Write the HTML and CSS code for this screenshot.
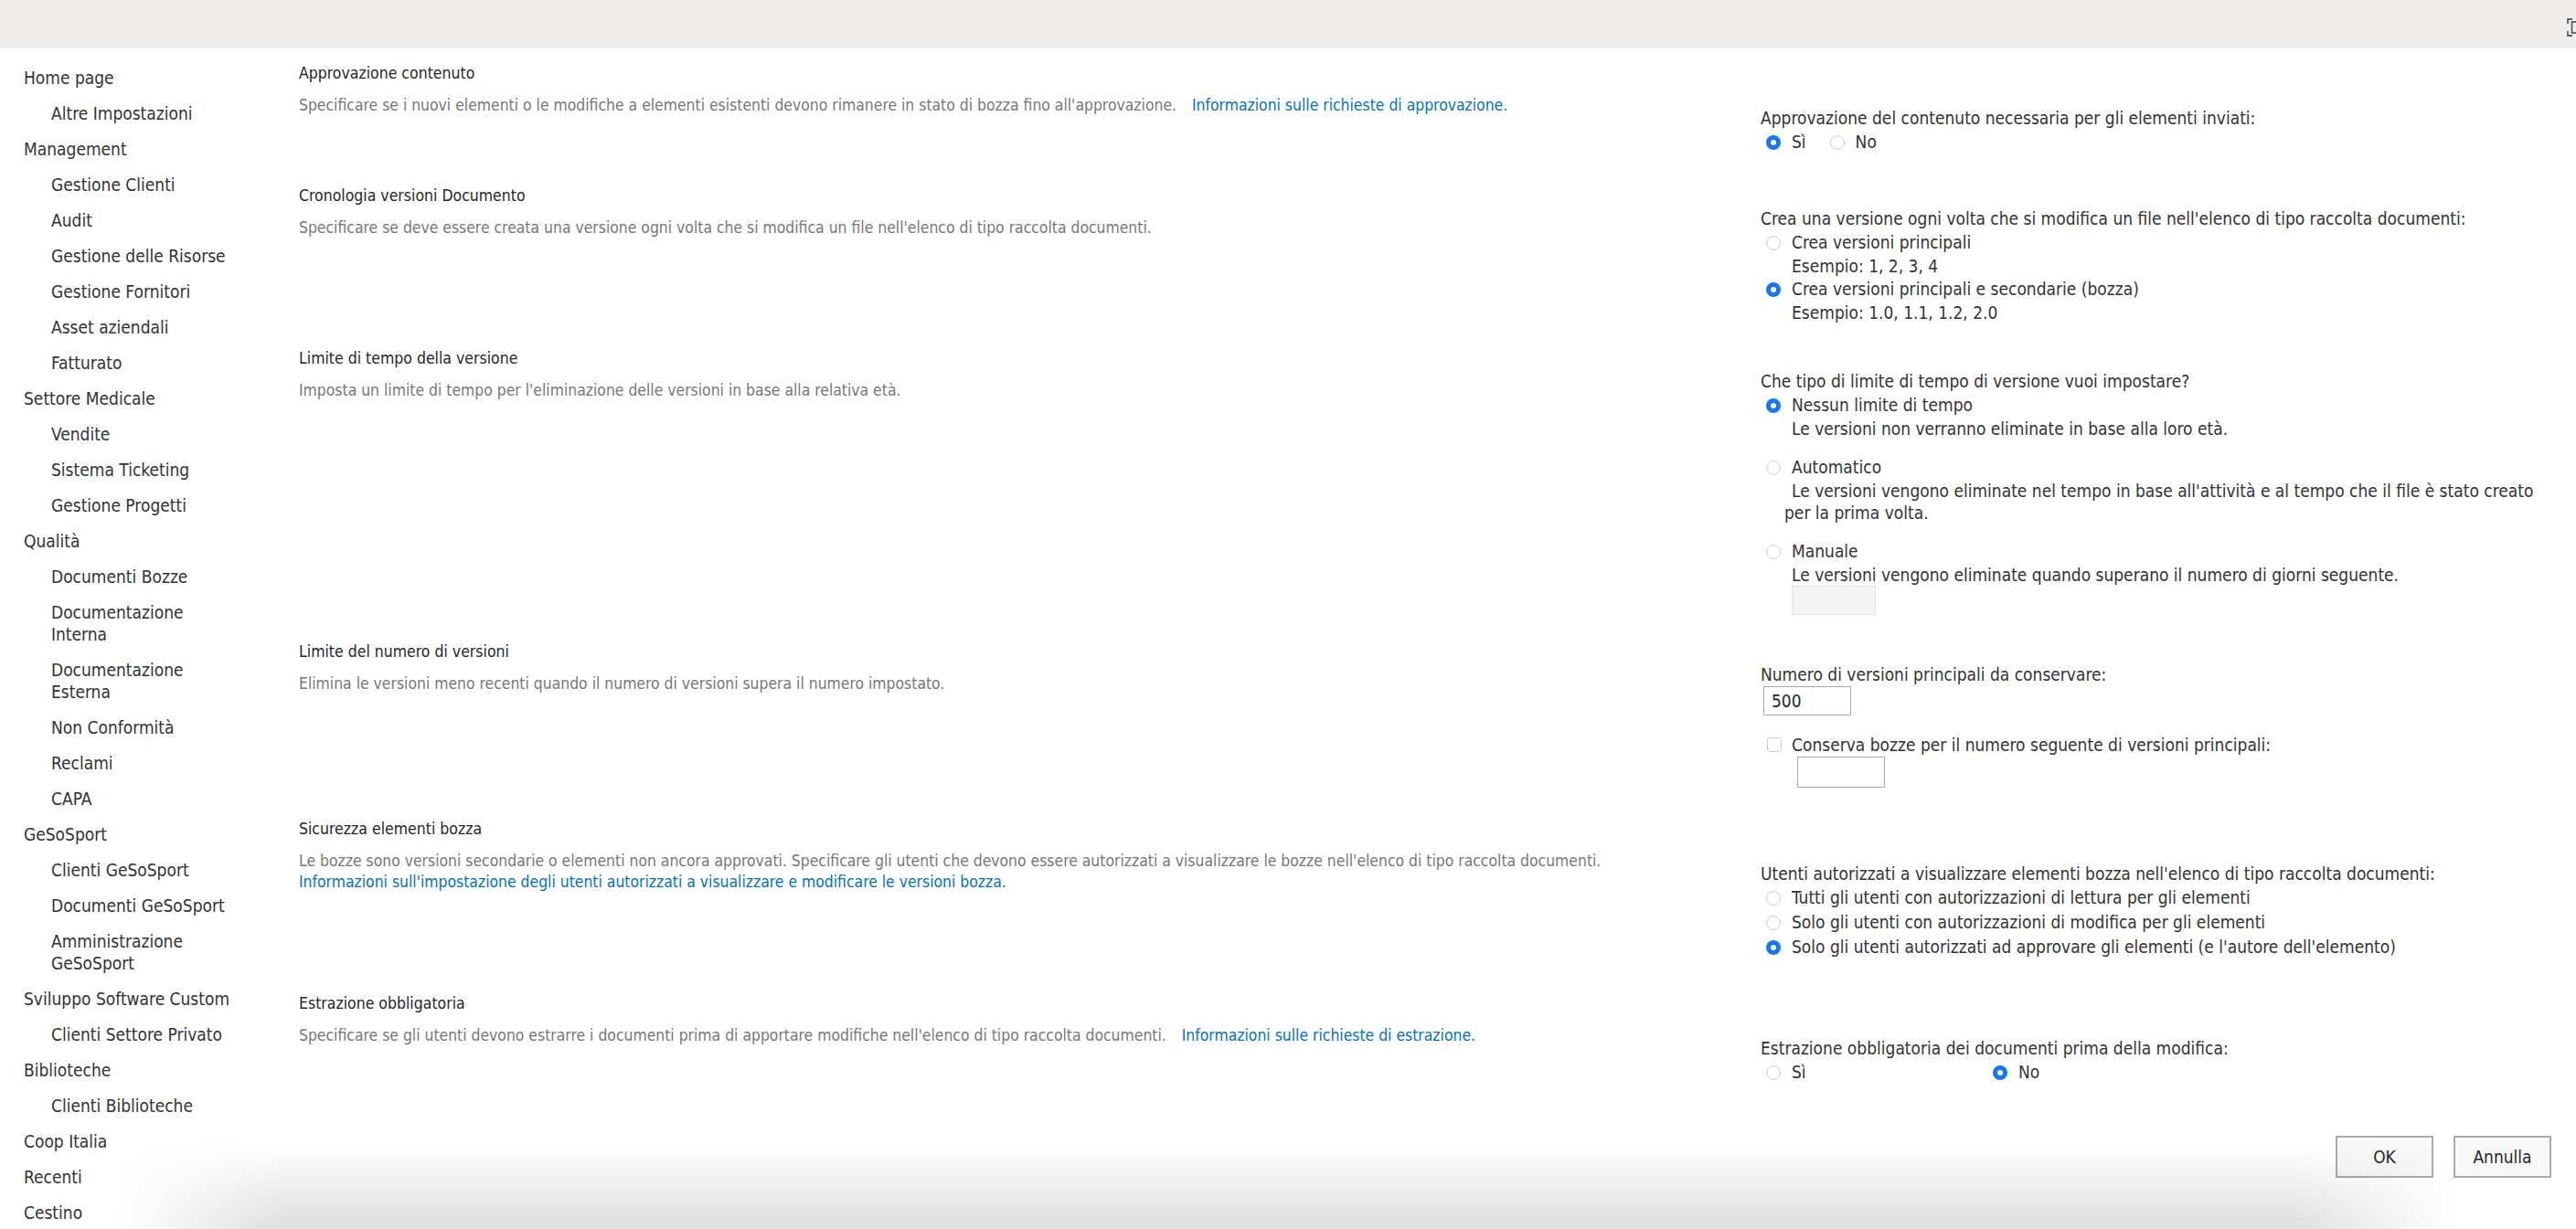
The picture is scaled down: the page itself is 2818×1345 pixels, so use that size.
FILE: index.html
```html
<!DOCTYPE html>
<html lang="it">
<head>
    <meta charset="UTF-8">
    <meta name="viewport" content="width=device-width, initial-scale=1.0">
    <title>Impostazioni controllo delle versioni</title>
    <link rel="stylesheet" href="styles.css">
</head>
<body>
    <div class="suite-bar">
        <svg class="focus-btn" viewBox="0 0 20 20" width="20" height="20" aria-hidden="true">
            <path d="M1 6V1h5M1 14v5h5M19 6V1h-5M19 14v5h-5" fill="none" stroke="#5f5f5f" stroke-width="1.8"/>
            <rect x="5.5" y="4" width="9" height="12" fill="none" stroke="#5f5f5f" stroke-width="1.8"/>
        </svg>
    </div>

    <div class="page">
        <nav class="side-nav">
            <a class="nav-item" href="#">Home page</a>
            <a class="nav-item sub" href="#">Altre Impostazioni</a>
            <a class="nav-item" href="#">Management</a>
            <a class="nav-item sub" href="#">Gestione Clienti</a>
            <a class="nav-item sub" href="#">Audit</a>
            <a class="nav-item sub" href="#">Gestione delle Risorse</a>
            <a class="nav-item sub" href="#">Gestione Fornitori</a>
            <a class="nav-item sub" href="#">Asset aziendali</a>
            <a class="nav-item sub" href="#">Fatturato</a>
            <a class="nav-item" href="#">Settore Medicale</a>
            <a class="nav-item sub" href="#">Vendite</a>
            <a class="nav-item sub" href="#">Sistema Ticketing</a>
            <a class="nav-item sub" href="#">Gestione Progetti</a>
            <a class="nav-item" href="#">Qualità</a>
            <a class="nav-item sub" href="#">Documenti Bozze</a>
            <a class="nav-item sub" href="#">Documentazione Interna</a>
            <a class="nav-item sub" href="#">Documentazione Esterna</a>
            <a class="nav-item sub" href="#">Non Conformità</a>
            <a class="nav-item sub" href="#">Reclami</a>
            <a class="nav-item sub" href="#">CAPA</a>
            <a class="nav-item" href="#">GeSoSport</a>
            <a class="nav-item sub" href="#">Clienti GeSoSport</a>
            <a class="nav-item sub" href="#">Documenti GeSoSport</a>
            <a class="nav-item sub" href="#">Amministrazione GeSoSport</a>
            <a class="nav-item" href="#">Sviluppo Software Custom</a>
            <a class="nav-item sub" href="#">Clienti Settore Privato</a>
            <a class="nav-item" href="#">Biblioteche</a>
            <a class="nav-item sub" href="#">Clienti Biblioteche</a>
            <a class="nav-item" href="#">Coop Italia</a>
            <a class="nav-item" href="#">Recenti</a>
            <a class="nav-item" href="#">Cestino</a>
        </nav>

        <main class="content">
            <!-- Approvazione contenuto -->
            <section class="section">
                <div class="section-info">
                    <h3 class="section-title">Approvazione contenuto</h3>
                    <p class="section-desc">Specificare se i nuovi elementi o le modifiche a elementi esistenti devono rimanere in stato di bozza fino all'approvazione. <a class="help-link" href="#">Informazioni sulle richieste di approvazione.</a></p>
                </div>
                <div class="controls spaced">
                    <div class="field-label">Approvazione del contenuto necessaria per gli elementi inviati:</div>
                    <div class="option-row">
                        <label class="option"><input class="radio" type="radio" name="approval" checked>Sì</label>
                        <label class="option"><input class="radio" type="radio" name="approval">No</label>
                    </div>
                </div>
            </section>

            <!-- Cronologia versioni -->
            <section class="section mb-26">
                <div class="section-info">
                    <h3 class="section-title">Cronologia versioni Documento</h3>
                    <p class="section-desc">Specificare se deve essere creata una versione ogni volta che si modifica un file nell'elenco di tipo raccolta documenti.</p>
                </div>
                <div class="controls">
                    <div class="field-label">Crea una versione ogni volta che si modifica un file nell'elenco di tipo raccolta documenti:</div>
                    <label class="option"><input class="radio" type="radio" name="versioning">Crea versioni principali</label>
                    <div class="example">Esempio: 1, 2, 3, 4</div>
                    <label class="option"><input class="radio" type="radio" name="versioning" checked>Crea versioni principali e secondarie (bozza)</label>
                    <div class="example">Esempio: 1.0, 1.1, 1.2, 2.0</div>
                </div>
            </section>

            <!-- Limite di tempo -->
            <section class="section mb-28">
                <div class="section-info">
                    <h3 class="section-title">Limite di tempo della versione</h3>
                    <p class="section-desc">Imposta un limite di tempo per l'eliminazione delle versioni in base alla relativa età.</p>
                </div>
                <div class="controls">
                    <div class="field-label">Che tipo di limite di tempo di versione vuoi impostare?</div>
                    <label class="option"><input class="radio" type="radio" name="timelimit" checked>Nessun limite di tempo</label>
                    <div class="option-desc">Le versioni non verranno eliminate in base alla loro età.</div>
                    <label class="option gap-top"><input class="radio" type="radio" name="timelimit">Automatico</label>
                    <div class="option-desc indent">Le versioni vengono eliminate nel tempo in base all'attività e al tempo che il file è stato creato per la prima volta.</div>
                    <label class="option gap-top"><input class="radio" type="radio" name="timelimit">Manuale</label>
                    <div class="option-desc">Le versioni vengono eliminate quando superano il numero di giorni seguente.</div>
                    <input class="text-box days-box" type="text" disabled>
                </div>
            </section>

            <!-- Limite numero versioni -->
            <section class="section">
                <div class="section-info">
                    <h3 class="section-title">Limite del numero di versioni</h3>
                    <p class="section-desc">Elimina le versioni meno recenti quando il numero di versioni supera il numero impostato.</p>
                </div>
                <div class="controls">
                    <div class="field-label">Numero di versioni principali da conservare:</div>
                    <input class="text-box major-box" type="text" value="500">
                    <label class="option check-row"><input class="checkbox" type="checkbox">Conserva bozze per il numero seguente di versioni principali:</label>
                    <input class="text-box drafts-box" type="text">
                </div>
            </section>

            <!-- Sicurezza bozze -->
            <section class="section mb-36">
                <div class="section-info">
                    <h3 class="section-title">Sicurezza elementi bozza</h3>
                    <p class="section-desc">Le bozze sono versioni secondarie o elementi non ancora approvati. Specificare gli utenti che devono essere autorizzati a visualizzare le bozze nell'elenco di tipo raccolta documenti.<br><a class="help-link flush" href="#">Informazioni sull'impostazione degli utenti autorizzati a visualizzare e modificare le versioni bozza.</a></p>
                </div>
                <div class="controls spaced">
                    <div class="field-label">Utenti autorizzati a visualizzare elementi bozza nell'elenco di tipo raccolta documenti:</div>
                    <label class="option"><input class="radio" type="radio" name="drafts">Tutti gli utenti con autorizzazioni di lettura per gli elementi</label>
                    <label class="option"><input class="radio" type="radio" name="drafts">Solo gli utenti con autorizzazioni di modifica per gli elementi</label>
                    <label class="option"><input class="radio" type="radio" name="drafts" checked>Solo gli utenti autorizzati ad approvare gli elementi (e l'autore dell'elemento)</label>
                </div>
            </section>

            <!-- Estrazione obbligatoria -->
            <section class="section mb-56">
                <div class="section-info">
                    <h3 class="section-title">Estrazione obbligatoria</h3>
                    <p class="section-desc">Specificare se gli utenti devono estrarre i documenti prima di apportare modifiche nell'elenco di tipo raccolta documenti. <a class="help-link" href="#">Informazioni sulle richieste di estrazione.</a></p>
                </div>
                <div class="controls spaced">
                    <div class="field-label">Estrazione obbligatoria dei documenti prima della modifica:</div>
                    <div class="option-row wide">
                        <label class="option"><input class="radio" type="radio" name="checkout">Sì</label>
                        <label class="option"><input class="radio" type="radio" name="checkout" checked>No</label>
                    </div>
                </div>
            </section>

            <div class="form-actions">
                <button class="btn">OK</button>
                <button class="btn">Annulla</button>
            </div>
        </main>
    </div>

    <div class="bottom-shade"></div>
</body>
</html>
```

FILE: styles.css
```css
* {
    box-sizing: border-box;
}

html, body {
    margin: 0;
    height: 100%;
    overflow: hidden;
}

body {
    font-family: "DejaVu Sans Condensed", "DejaVu Sans", sans-serif;
    font-stretch: condensed;
    color: #333;
    background: #fff;
    position: relative;
}

/* top bar */
.suite-bar {
    height: 53px;
    background: #efeeed;
    position: relative;
    overflow: hidden;
}

.focus-btn {
    position: absolute;
    left: 2808px;
    top: 20px;
}

.page {
    display: flex;
}

/* left navigation */
.side-nav {
    width: 300px;
    flex: none;
    padding: 12.5px 40px 0 26px;
    display: flex;
    flex-direction: column;
}

.nav-item {
    font-size: 19px;
    line-height: 24px;
    padding: 7.5px 0;
    color: #333;
    text-decoration: none;
}

.nav-item.sub {
    padding-left: 30px;
}

/* settings form */
.content {
    flex: 1;
    padding: 15px 27px 0 27px;
}

.section {
    display: grid;
    grid-template-columns: 1560px 865px;
    column-gap: 39px;
    margin-bottom: 33px;
}

.mb-26 { margin-bottom: 26px; }
.mb-28 { margin-bottom: 28px; }
.mb-36 { margin-bottom: 36px; }
.mb-56 { margin-bottom: 56px; }

.section-title {
    margin: 0;
    font-size: 17.5px;
    line-height: 24px;
    font-weight: normal;
    color: #262626;
}

.section-desc {
    margin: 12px 0 0;
    font-size: 17.4px;
    line-height: 23px;
    color: #777;
}

.help-link {
    color: #0072c6;
    text-decoration: none;
    margin-left: 12px;
}

.help-link.flush {
    margin-left: 0;
}

.controls {
    padding-top: 24px;
    font-size: 19px;
    color: #333;
}

.controls.spaced {
    padding-top: 48px;
}

.field-label {
    line-height: 26px;
}

.option-row {
    display: flex;
    gap: 20px;
}

.option-row.wide {
    gap: 0;
}

.option-row.wide .option:first-child {
    width: 248px;
}

.option {
    display: flex;
    align-items: center;
    height: 27px;
    line-height: 27px;
}

.option.gap-top {
    margin-top: 17px;
}

.radio {
    appearance: none;
    -webkit-appearance: none;
    width: 16px;
    height: 16px;
    margin: 0 12px 0 6px;
    border-radius: 50%;
    border: 1px solid #cfcfcf;
    background: #fff;
    flex: none;
}

.radio:checked {
    border: 5px solid #1677f3;
    background: #fff;
}

.checkbox {
    appearance: none;
    -webkit-appearance: none;
    width: 16px;
    height: 16px;
    margin: 0 11px 0 7px;
    border-radius: 3px;
    border: 1px solid #cfcfcf;
    background: #fff;
    flex: none;
}

.example {
    line-height: 24px;
    padding-left: 34px;
}

.option-desc {
    line-height: 24px;
    padding-left: 34px;
}

.option-desc.indent {
    padding-left: 26px;
    text-indent: 8px;
}

.text-box {
    display: block;
    font-family: inherit;
    font-size: 19px;
    color: #262626;
    background: #fff;
    border: 1px solid #a9a9a9;
    padding: 0 8px;
    outline: none;
}

.days-box {
    width: 92px;
    height: 32px;
    margin-left: 34px;
    background: #f4f4f4;
    border-color: #e3e3e3;
}

.major-box {
    width: 96px;
    height: 32px;
    margin-left: 3px;
}

.check-row {
    margin-top: 19px;
    height: 26px;
}

.drafts-box {
    width: 96px;
    height: 34px;
    margin-left: 40px;
}

.form-actions {
    display: flex;
    justify-content: flex-end;
    gap: 22px;
}

.btn {
    width: 107px;
    height: 46px;
    font-family: inherit;
    font-size: 19px;
    color: #262626;
    background: #f8f8f8;
    border: 2px solid #ababab;
    cursor: pointer;
}

/* soft shadow along the bottom edge */
.bottom-shade {
    position: absolute;
    left: 130px;
    right: 130px;
    bottom: 0;
    height: 95px;
    background: linear-gradient(to top, rgba(0, 0, 0, 0.13), rgba(0, 0, 0, 0));
    -webkit-mask-image: linear-gradient(to right, transparent, #000 7%, #000 93%, transparent);
    pointer-events: none;
}
```
